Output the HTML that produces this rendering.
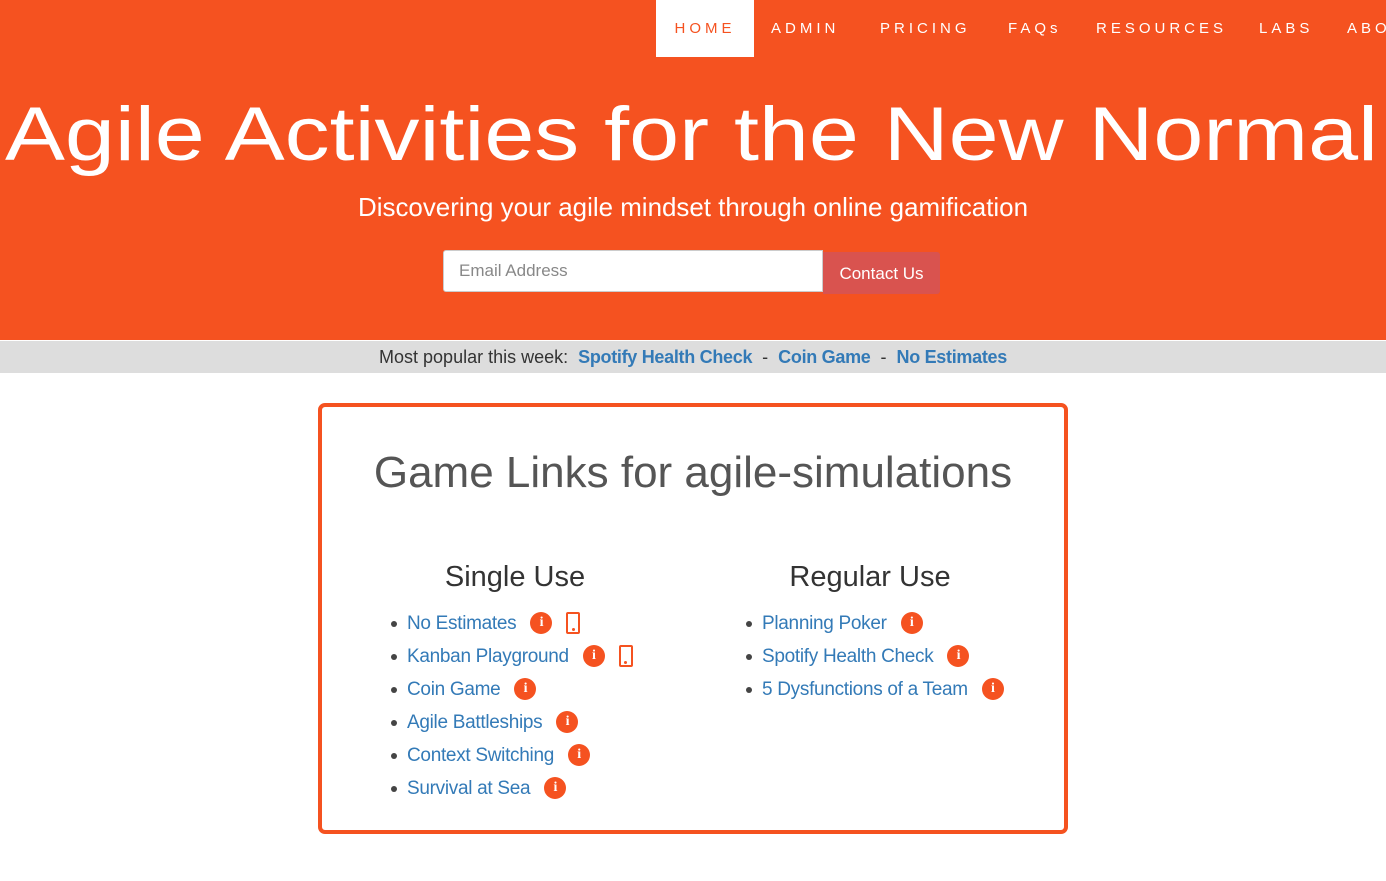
<!DOCTYPE html>
<html><head><style>
body{margin:0;width:1386px;height:881px;overflow:hidden;background:#fff;font-family:"Liberation Sans",sans-serif;position:relative}
.hdr{position:absolute;left:0;top:0;width:1386px;height:340px;background:#F55220}
.nav{position:absolute;top:0;height:57px;line-height:57px;font-size:15px;letter-spacing:4px;color:#fff}
.home{background:#fff;color:#F55220;left:656px;width:98px;text-align:center}
.a{position:absolute;white-space:nowrap}
.bar{position:absolute;left:0;top:341px;width:1386px;height:32px;background:#ddd;text-align:center;line-height:33px;font-size:18px;color:#333}
.bar a{color:#337ab7;font-weight:bold;text-decoration:none;letter-spacing:-0.3px}
.box{position:absolute;left:318px;top:403px;width:742px;height:423px;border:4px solid #F55220;border-radius:7px}
ul{position:absolute;margin:0;padding:0;list-style:none;font-size:19px}
li{height:33px;line-height:33px;position:relative;color:#337ab7;white-space:nowrap;letter-spacing:-0.3px}
li:before{content:"";position:absolute;left:-16px;top:14px;width:6px;height:6px;border-radius:3px;background:#444}
.i{display:inline-block;width:22px;height:22px;border-radius:11px;background:#F55220;color:#fff;font-size:14px;font-weight:bold;line-height:22px;text-align:center;vertical-align:middle;margin-left:14px;font-family:"Liberation Serif",serif;position:relative;top:-1px}
.p{display:inline-block;width:14px;height:22px;border:2.5px solid #F55220;border-radius:2px;vertical-align:middle;margin-left:14px;position:relative;top:-1px;box-sizing:border-box}
.p:after{content:"";position:absolute;left:3.5px;bottom:1px;width:3px;height:3px;border-radius:2px;background:#F55220}
</style></head><body>
<div class="hdr"></div>
<div class="nav a home">HOME</div>
<div class="nav a" style="left:771px">ADMIN</div>
<div class="nav a" style="left:880px">PRICING</div>
<div class="nav a" style="left:1008px">FAQs</div>
<div class="nav a" style="left:1096px">RESOURCES</div>
<div class="nav a" style="left:1259px">LABS</div>
<div class="nav a" style="left:1347px">ABOUT</div>
<svg class="a" style="left:0;top:80px" width="1386" height="100"><text x="5" y="80" fill="#fff" font-family="Liberation Sans" font-size="76" textLength="1373" lengthAdjust="spacingAndGlyphs">Agile Activities for the New Normal</text></svg>
<svg class="a" style="left:0;top:188px" width="1386" height="40"><text x="358" y="28" fill="#fff" font-family="Liberation Sans" font-size="26" textLength="670" lengthAdjust="spacingAndGlyphs">Discovering your agile mindset through online gamification</text></svg>
<div class="a" style="left:443px;top:250px;background:#fff;border:1px solid #ccc;border-radius:3px 0 0 3px;font-size:17px;color:#888;line-height:40px;padding-left:15px;box-sizing:border-box;width:380px;height:42px">Email Address</div>
<div class="a" style="left:823px;top:252px;width:117px;height:42px;background:#d9534f;color:#fff;font-size:17px;line-height:43px;text-align:center;border-radius:0 3px 3px 0">Contact Us</div>
<div class="bar">Most popular this week:&nbsp; <a>Spotify Health Check</a> &nbsp;-&nbsp; <a>Coin Game</a> &nbsp;-&nbsp; <a>No Estimates</a></div>
<div class="box"></div>
<div class="a" style="left:318px;width:750px;top:448px;text-align:center;font-size:44px;color:#555">Game Links for agile-simulations</div>
<div class="a" style="left:415px;width:200px;top:561px;text-align:center;font-size:29px;color:#333">Single Use</div>
<div class="a" style="left:770px;width:200px;top:561px;text-align:center;font-size:29px;color:#333">Regular Use</div>
<ul style="left:407px;top:607px">
<li>No Estimates<span class="i">i</span><span class="p"></span></li>
<li>Kanban Playground<span class="i">i</span><span class="p"></span></li>
<li>Coin Game<span class="i">i</span></li>
<li>Agile Battleships<span class="i">i</span></li>
<li>Context Switching<span class="i">i</span></li>
<li>Survival at Sea<span class="i">i</span></li>
</ul>
<ul style="left:762px;top:607px">
<li>Planning Poker<span class="i">i</span></li>
<li>Spotify Health Check<span class="i">i</span></li>
<li>5 Dysfunctions of a Team<span class="i">i</span></li>
</ul>
</body></html>
